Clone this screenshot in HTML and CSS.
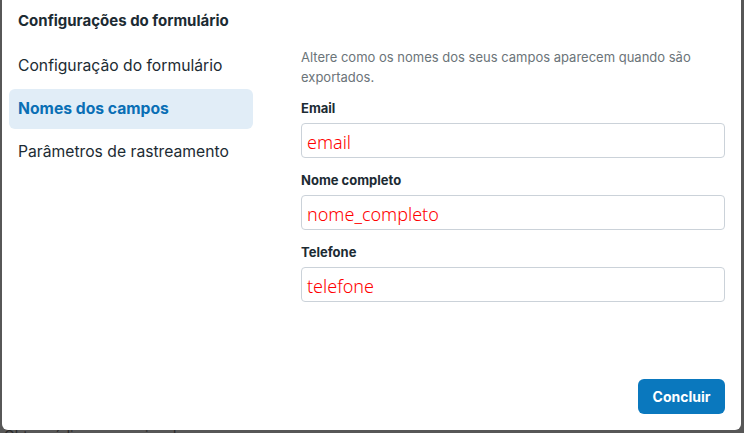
FILE: index.html
```html
<!DOCTYPE html>
<html lang="pt">
<head>
<meta charset="utf-8">
<link rel="stylesheet" href="styles.css">
</head>
<body>
<div class="dialog">
  <aside class="sidebar">
    <h2 class="title">Configurações do formulário</h2>
    <nav class="nav">
      <div class="nav-item">Configuração do formulário</div>
      <div class="nav-item active">Nomes dos campos</div>
      <div class="nav-item">Parâmetros de rastreamento</div>
    </nav>
  </aside>
  <main class="main">
    <p class="desc">Altere como os nomes dos seus campos aparecem quando são exportados.</p>
    <label class="label">Email</label>
    <div class="input">email</div>
    <label class="label">Nome completo</label>
    <div class="input">nome_completo</div>
    <label class="label">Telefone</label>
    <div class="input">telefone</div>
    <div class="footer">
      <button class="btn">Concluir</button>
    </div>
  </main>
</div>
<div class="behind">Obter código promocional</div>
</body>
</html>
```

FILE: styles.css
```css
html, body {
  margin: 0;
  padding: 0;
}
body {
  background: #575757;
  width: 744px;
  height: 433px;
  overflow: hidden;
  font-family: Inter, "Noto Sans", sans-serif;
  color: #1c2b33;
}
.dialog {
  margin-left: 2px;
  width: 739px;
  height: 430px;
  background: #ffffff;
  border-radius: 0 0 6px 6px;
  display: flex;
  box-sizing: border-box;
}
.sidebar {
  width: 244px;
  padding-left: 7px;
  flex: none;
}
.title {
  margin: 0;
  padding: 10px 0 0 9px;
  font-size: 15px;
  line-height: 22px;
  font-weight: 700;
  color: #1c2b33;
}
.nav {
  margin-top: 14px;
  display: flex;
  flex-direction: column;
  gap: 3px;
}
.nav-item {
  height: 40px;
  line-height: 40px;
  padding-left: 9px;
  font-size: 15.7px;
  color: #1c2b33;
  border-radius: 6px;
}
.nav-item.active {
  background: #e1edf7;
  color: #0a6fb5;
  font-weight: 700;
}
.main {
  margin-left: 48px;
  flex: 1;
  padding: 48px 16px 16px 0;
  display: flex;
  flex-direction: column;
}
.desc {
  margin: 0;
  font-size: 13px;
  line-height: 19.5px;
  color: #6b7479;
}
.label {
  display: block;
  margin-top: 13px;
  font-size: 13px;
  line-height: 17px;
  font-weight: 700;
  color: #1c2b33;
}
.input + .label {
  margin-top: 14px;
}
.input {
  margin-top: 6px;
  height: 35px;
  box-sizing: border-box;
  border: 1px solid #cbd2d9;
  border-radius: 4px;
  padding: 0 5px;
  font-family: "Noto Sans", "Open Sans", sans-serif;
  font-size: 18px;
  font-weight: 300;
  line-height: 36px;
  color: #ff0000;
}
.footer {
  margin-top: auto;
  display: flex;
  justify-content: flex-end;
}
.btn {
  width: 87px;
  height: 35px;
  border: none;
  border-radius: 6px;
  background: #0a78be;
  color: #ffffff;
  font-family: Inter, "Noto Sans", sans-serif;
  font-size: 14px;
  font-weight: 700;
}
.behind {
  margin: -2px 0 0 4px;
  font-family: Inter, sans-serif;
  font-size: 14px;
  line-height: 16px;
  color: #2a2a2a;
}
```
